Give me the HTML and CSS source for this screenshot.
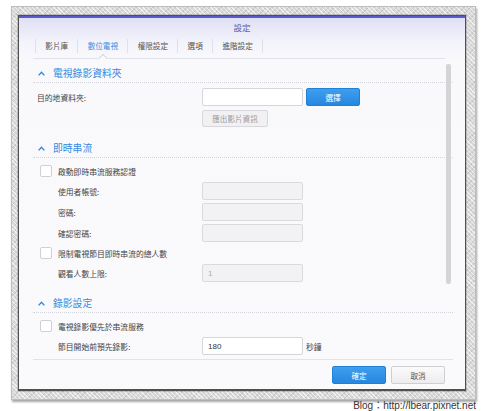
FILE: index.html
```html
<!DOCTYPE html>
<html lang="zh-Hant">
<head>
<meta charset="utf-8">
<title>設定</title>
<link rel="stylesheet" href="styles.css">
</head>
<body>
<div class="page">
  <div class="frame">
    <div class="window">
      <div class="titlebar">設定</div>
      <div class="tabbar">
        <div class="tab">影片庫</div>
        <div class="tab active">數位電視</div>
        <div class="tab">權限設定</div>
        <div class="tab">選項</div>
        <div class="tab">進階設定</div>
      </div>
      <div class="body">
        <div class="content">
          <section class="section">
            <div class="sec-head">
              <svg class="chev" width="7" height="5" viewBox="0 0 7 5"><polyline points="0.6,4.4 3.5,1.2 6.4,4.4" fill="none" stroke="#3389e0" stroke-width="1.4"/></svg>
              <span>電視錄影資料夾</span>
            </div>
            <div class="rows">
              <div class="row">
                <span class="label top">目的地資料夾:</span>
                <span class="input"></span>
                <span class="btn primary pick">選擇</span>
              </div>
              <div class="row btn-row">
                <span class="btn disabled">匯出影片資訊</span>
              </div>
            </div>
          </section>

          <section class="section">
            <div class="sec-head">
              <svg class="chev" width="7" height="5" viewBox="0 0 7 5"><polyline points="0.6,4.4 3.5,1.2 6.4,4.4" fill="none" stroke="#3389e0" stroke-width="1.4"/></svg>
              <span>即時串流</span>
            </div>
            <div class="rows">
              <div class="row check-row"><span class="checkbox"></span><span class="check-label">啟動即時串流服務認證</span></div>
              <div class="row"><span class="label sub">使用者帳號:</span><span class="input off"></span></div>
              <div class="row"><span class="label sub">密碼:</span><span class="input off"></span></div>
              <div class="row"><span class="label sub">確認密碼:</span><span class="input off"></span></div>
              <div class="row check-row"><span class="checkbox"></span><span class="check-label">限制電視節目即時串流的總人數</span></div>
              <div class="row"><span class="label sub">觀看人數上限:</span><span class="input off"><span class="val dim">1</span></span></div>
            </div>
          </section>

          <section class="section">
            <div class="sec-head">
              <svg class="chev" width="7" height="5" viewBox="0 0 7 5"><polyline points="0.6,4.4 3.5,1.2 6.4,4.4" fill="none" stroke="#3389e0" stroke-width="1.4"/></svg>
              <span>錄影設定</span>
            </div>
            <div class="rows">
              <div class="row check-row"><span class="checkbox"></span><span class="check-label">電視錄影優先於串流服務</span></div>
              <div class="row"><span class="label sub">節目開始前預先錄影:</span><span class="input"><span class="val">180</span></span><span class="unit">秒鐘</span></div>
            </div>
          </section>
        </div>
        <div class="scrollbar"></div>
      </div>
      <div class="footer">
        <span class="btn primary fbtn">確定</span>
        <span class="btn cancel fbtn">取消</span>
      </div>
    </div>
  </div>
  <div class="watermark">Blog：http://lbear.pixnet.net</div>
</div>
</body>
</html>
```

FILE: styles.css
```css
* { box-sizing: border-box; }

html, body {
  margin: 0;
  padding: 0;
  background: #ffffff;
}

body {
  font-family: "Noto Sans CJK TC", "Liberation Sans", sans-serif;
  color: #444;
}

.page {
  width: 486px;
  height: 411px;
  padding: 6px 0 0 11px;
  overflow: hidden;
}

.frame {
  width: 465px;
  height: 394px;
  padding: 8px 9px 9px 6px;
  border: 1px solid #bdbdbd;
  background-color: #d9d9d9;
  background-image:
    repeating-linear-gradient(45deg, rgba(255,255,255,0.6) 0 1px, transparent 1px 3px),
    repeating-linear-gradient(-45deg, rgba(0,0,0,0.09) 0 1px, transparent 1px 4px);
  box-shadow: 1px 2px 2px rgba(0,0,0,0.35);
}

.window {
  width: 448px;
  height: 376px;
  border: 1px solid #505050;
  border-bottom-width: 2px;
  background: linear-gradient(to bottom, #dedef4 0, #f3f3fb 26px, #f9f9fc 45px, #fafafc 100%);
  display: flex;
  flex-direction: column;
  box-shadow: 0 0 0 1px rgba(0,0,0,0.15);
}

.titlebar {
  border-top: 2px solid #5a5acb;
  height: 21px;
  line-height: 19px;
  text-align: center;
  font-size: 8.5px;
  color: #5a5aa8;
}

.tabbar {
  margin: 0 20px 0 14px;
  height: 22px;
  padding: 2px 0 5px 2px;
  border-bottom: 1px solid #e2e2ea;
  display: flex;
  align-items: center;
}

.tab {
  height: 14px;
  line-height: 14px;
  padding: 0 9.3px;
  font-size: 7.6px;
  color: #555;
  border-right: 1px solid #e0e0e6;
  position: relative;
}

.tab:first-child { border-left: 1px solid #e0e0e6; }

.tab.active { color: #3a8de4; }

.tab.active::after {
  content: "";
  position: absolute;
  left: 50%;
  bottom: -8px;
  width: 5px;
  height: 5px;
  margin-left: -2.5px;
  background: #fafafc;
  border-left: 1px solid #d6d6de;
  border-top: 1px solid #d6d6de;
  transform: rotate(45deg);
}

.body {
  height: 300px;
  position: relative;
  overflow: hidden;
}

.content {
  margin: 0 12px 0 14px;
  padding-top: 5px;
}

.section + .section { margin-top: 12px; }

.sec-head {
  height: 19px;
  padding-left: 5px;
  display: flex;
  align-items: center;
  border-bottom: 1px dotted #d4d4dc;
  font-size: 9.8px;
  color: #3389e0;
}

.chev { margin-right: 8px; display: block; }

.rows {
  padding-top: 5px;
  display: flex;
  flex-direction: column;
  gap: 3px;
}

.row {
  height: 18px;
  display: flex;
  align-items: center;
  font-size: 7.8px;
  color: #444;
}

.check-row {
  height: 16px;
  padding-left: 7px;
}

.checkbox {
  width: 12px;
  height: 12px;
  background: #fff;
  border: 1px solid #cfcfd4;
  border-radius: 2px;
  margin-right: 6px;
}

.label.top {
  width: 169px;
  padding-left: 4px;
}

.label.sub {
  width: 169px;
  padding-left: 25px;
}

.input {
  width: 101px;
  height: 18px;
  background: #fff;
  border: 1px solid #d6d6da;
  border-radius: 2px;
  display: flex;
  align-items: center;
  padding-left: 5px;
}

.input.off {
  background: #f2f2f4;
  border-color: #dadade;
}

.val {
  font-family: "Liberation Sans", sans-serif;
  font-size: 8px;
  color: #333;
}

.val.dim { color: #aaa; }

.unit {
  margin-left: 3px;
  font-size: 7.8px;
  color: #444;
}

.btn {
  height: 18px;
  display: flex;
  align-items: center;
  justify-content: center;
  border-radius: 2px;
  font-size: 7.6px;
}

.btn.primary {
  background: linear-gradient(to bottom, #3e9ff0, #2587df);
  border: 1px solid #1f80d6;
  color: #fff;
}

.pick {
  width: 54px;
  margin-left: 3px;
}

.btn-row { margin-top: 1px; height: 17px; padding-left: 169px; }

.btn.disabled {
  width: 66px;
  height: 17px;
  background: #f1f1f3;
  border: 1px solid #d8d8dc;
  color: #9a9a9a;
}

.btn.cancel {
  background: linear-gradient(to bottom, #fbfbfb, #ececee);
  border: 1px solid #cfcfd3;
  color: #555;
}

.scrollbar {
  position: absolute;
  left: 427px;
  top: 5px;
  width: 5px;
  height: 220px;
  border-radius: 2px;
  background: #d4d4d6;
}

.footer {
  margin: 0 12px 0 14px;
  border-top: 1px solid #e2e2e8;
  padding: 6px 8px 0 0;
  display: flex;
  justify-content: flex-end;
  gap: 5px;
}

.fbtn { width: 54px; }

.watermark {
  width: 465px;
  margin-top: 0;
  height: 11px;
  line-height: 11px;
  text-align: right;
  font-family: "Liberation Sans", "Noto Sans CJK TC", sans-serif;
  font-size: 10px;
  color: #333;
}
```
